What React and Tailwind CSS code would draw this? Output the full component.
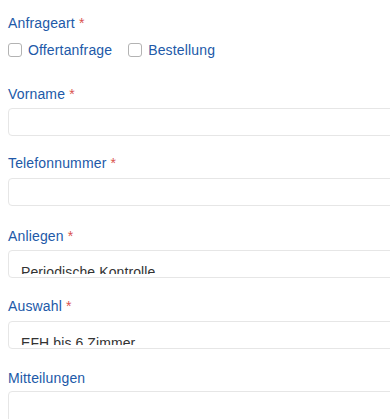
import React from 'react';

const LABEL = 'text-[#2159a8] text-[14px] leading-[20px] tracking-[0.15px]';

function Label({ text, required, className }) {
  return (
    <div className={`${LABEL} ${className}`}>
      {text}
      {required && <span className="text-[#d9534f]"> *</span>}
    </div>
  );
}

function Input({ className = '' }) {
  return <div className={`w-[420px] h-[28px] rounded-[4px] border border-[#e6e6e6] bg-white ${className}`} />;
}

function Select({ value }) {
  return (
    <div className="w-[420px] h-[28px] rounded-[4px] border border-[#e6e6e6] bg-white px-[12px]">
      <div className="h-[23px] overflow-hidden pt-[13px] text-[14px] leading-[16px] text-[#333] tracking-[0.1px]">
        {value}
      </div>
    </div>
  );
}

function Check({ label }) {
  return (
    <label className="flex items-center gap-[6px]">
      <span className="w-[14px] h-[14px] rounded-[3px] border border-[#b3b3b3] bg-white" />
      <span className={LABEL}>{label}</span>
    </label>
  );
}

export default function App() {
  return (
    <div className="w-[390px] h-[419px] overflow-hidden bg-white pl-[8px] font-['Liberation_Sans',Arial,sans-serif]">
      {/* Anfrageart */}
      <Label text="Anfrageart" required className="pt-[13px]" />
      <div className="mt-[7px] flex items-center gap-[16px] h-[20px]">
        <Check label="Offertanfrage" />
        <Check label="Bestellung" />
      </div>

      {/* Vorname */}
      <Label text="Vorname" required className="mt-[24px] mb-[4px]" />
      <Input />

      {/* Telefonnummer */}
      <Label text="Telefonnummer" required className="mt-[17px] mb-[5px]" />
      <Input />

      {/* Anliegen */}
      <Label text="Anliegen" required className="mt-[20px] mb-[4px]" />
      <Select value="Periodische Kontrolle" />

      {/* Auswahl */}
      <Label text="Auswahl" required className="mt-[18px] mb-[5px]" />
      <Select value="EFH bis 6 Zimmer" />

      {/* Mitteilungen */}
      <Label text="Mitteilungen" className="mt-[19px] mb-[3px]" />
      <Input className="h-[40px]" />
    </div>
  );
}
